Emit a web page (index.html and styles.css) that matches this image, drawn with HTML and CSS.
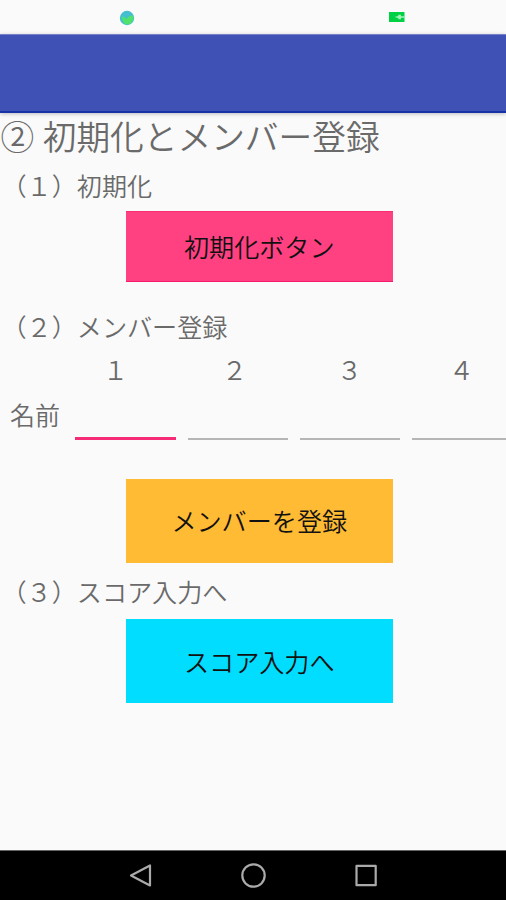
FILE: index.html
```html
<!DOCTYPE html>
<html lang="ja">
<head>
    <meta charset="UTF-8">
    <meta name="viewport" content="width=device-width, initial-scale=1.0">
    <title>初期化とメンバー登録</title>
    <link rel="stylesheet" href="styles.css">
</head>
<body>
    <div class="status-bar">
        <svg class="globe" width="16" height="16" viewBox="0 0 16 16">
            <circle cx="8" cy="8" r="7.2" fill="#45bfd0"/>
            <path d="M2.5 7 Q5 6 7.5 9 Q10 5 14.2 5.5 Q15.5 11 10 14.5 Q5 15 4 11 Z" fill="#50e26c"/>
        </svg>
        <svg class="battery" width="16" height="10" viewBox="0 0 16 10">
            <rect width="15.5" height="10" fill="#00d043"/>
            <path d="M5.5 5 L9 4 L9.5 2.8 L12 2.8 L12 4.2 L15.5 4.2 V5.8 H12 V7.2 H9.5 L9 6 Z" fill="#a4f2b8"/>
        </svg>
    </div>
    <header class="app-bar"></header>
    <main>
        <h1>② 初期化とメンバー登録</h1>

        <h2>（１）初期化</h2>
        <button class="btn btn-init">初期化ボタン</button>

        <h2 class="member-title">（２）メンバー登録</h2>
        <div class="numbers">
            <span>１</span>
            <span>２</span>
            <span>３</span>
            <span>４</span>
        </div>
        <div class="names">
            <label for="name1">名前</label>
            <input type="text" id="name1" class="active">
            <input type="text">
            <input type="text">
            <input type="text">
        </div>
        <button class="btn btn-member">メンバーを登録</button>

        <h2 class="score-title">（３）スコア入力へ</h2>
        <button class="btn btn-score">スコア入力へ</button>
    </main>
    <nav class="nav-bar">
        <svg width="24" height="26" viewBox="0 0 24 26">
            <path d="M22 2.5 V22.5 L3 12.5 Z" />
        </svg>
        <svg width="26" height="26" viewBox="0 0 26 26">
            <circle cx="13.5" cy="12.5" r="11.2" />
        </svg>
        <svg width="24" height="26" viewBox="0 0 24 26">
            <rect x="2.5" y="2.8" width="19.2" height="19.4" />
        </svg>
    </nav>
</body>
</html>
```

FILE: styles.css
```css
body {
    font-family: "Noto Sans CJK JP", sans-serif;
    font-weight: 350;
    background-color: #fafafa;
    color: #6a6a6a;
    margin: 0;
    height: 900px;
    display: flex;
    flex-direction: column;
    overflow: hidden;
}
.status-bar {
    height: 34px;
    display: flex;
    align-items: center;
    box-sizing: border-box;
    padding-left: 118.5px;
}
.globe {
    margin-top: 1px;
}
.battery {
    margin-left: 254px;
}
.app-bar {
    height: 79px;
    box-sizing: border-box;
    background-color: #3f51b5;
    border-top: 1px solid #7581c9;
    border-bottom: 2px solid #1733a8;
    box-shadow: 0 1px 4px rgba(0,0,0,0.25);
}
main {
    flex: 1;
    display: flex;
    flex-direction: column;
}
h1, h2 {
    margin: 0;
    font-weight: 350;
    white-space: nowrap;
}
h1 {
    font-size: 33.7px;
    word-spacing: 1px;
    height: 48px;
    line-height: 46px;
    padding-left: 0.5px;
}
h2 {
    font-size: 25.1px;
    height: 50px;
    line-height: 49px;
    padding-left: 1.5px;
}
.btn {
    font-family: inherit;
    font-size: 25.1px;
    font-weight: 350;
    color: #111;
    width: 266.5px;
    margin: 0 0 0 126px;
    padding: 0 0 1px;
    border: none;
}
.btn-init {
    height: 70.5px;
    margin-bottom: -0.5px;
    background-color: #ff4081;
    border-top: 1px solid #fb2d75;
    border-bottom: 1px solid #f51a6e;
}
.member-title {
    margin-top: 21px;
    line-height: 48px;
}
.numbers {
    display: grid;
    grid-template-columns: 119px 119px 111px 113px;
    height: 36px;
    line-height: 34px;
    font-size: 25px;
    padding-left: 56px;
    text-align: center;
}
.names {
    display: flex;
    align-items: flex-start;
    gap: 12px;
    height: 90px;
    padding-left: 10px;
    font-size: 25px;
}
.names label {
    width: 53px;
    line-height: 53px;
    flex-shrink: 0;
}
.names input {
    width: 100px;
    height: 52px;
    flex-shrink: 0;
    box-sizing: border-box;
    padding: 0;
    background: none;
    border: none;
    border-bottom: 2px solid #b5b5b5;
    font-size: 25px;
}
.names .active {
    width: 101px;
    border-bottom: 3px solid #f52b78;
}
.btn-member {
    height: 84px;
    margin-top: 0.5px;
    background-color: #ffbb33;
}
.score-title {
    height: 56.5px;
    line-height: 56px;
}
.btn-score {
    height: 84px;
    background-color: #00ddff;
}
.nav-bar {
    height: 50px;
    box-sizing: border-box;
    background-color: #000;
    border-top: 1px solid #666;
    display: flex;
    justify-content: center;
    align-items: center;
    gap: 88px;
}
.nav-bar svg {
    fill: none;
    stroke: #aaa;
    stroke-width: 2.2;
    stroke-linejoin: round;
}
```
